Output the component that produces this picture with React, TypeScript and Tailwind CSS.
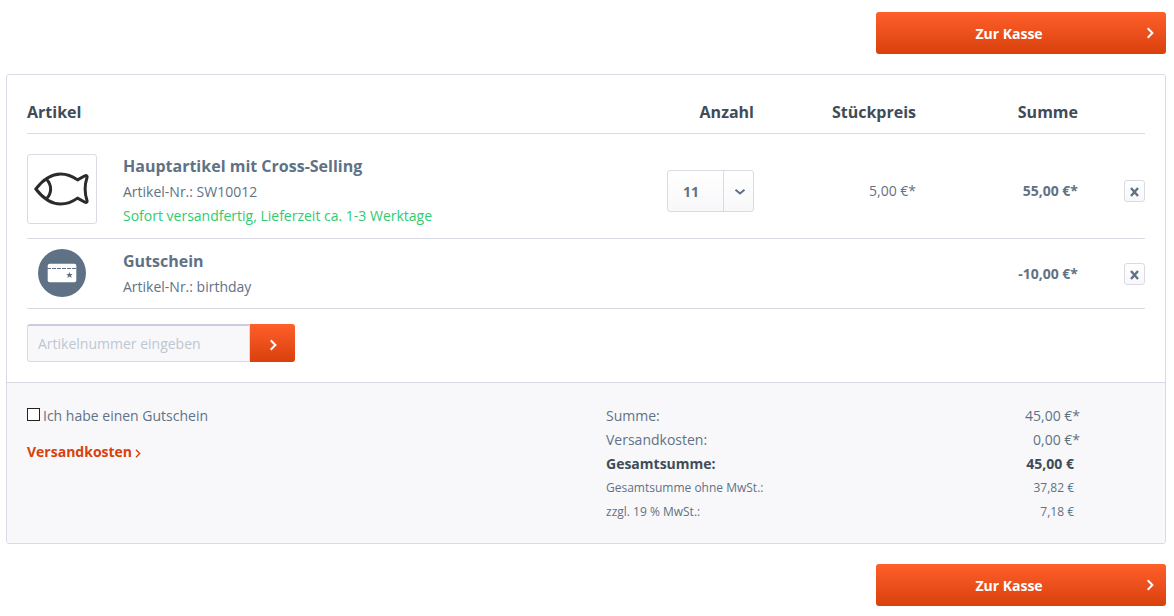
import type { ReactNode } from "react";

function ChevronRight({ className }: { className: string }) {
  return (
    <svg viewBox="0 0 8 12" fill="none" stroke="currentColor" className={className} aria-hidden="true">
      <path d="M1.7 1.3 6.400 6l-4.700 4.700" strokeWidth="2" />
    </svg>
  );
}

function CheckoutLink() {
  return (
    <div className="flex justify-end">
      <a
        href="#kasse"
        className="flex h-[42px] w-full items-center rounded-[3px] bg-linear-to-b from-[#ff5f29] to-[#d9400b] pr-3 text-sm font-bold text-white sm:w-1/4"
      >
        <span className="flex-1 pt-px pr-1 text-center">Zur Kasse</span>
        <ChevronRight className="mb-px h-3 w-2" />
      </a>
    </div>
  );
}

function FishIcon() {
  return (
    <svg viewBox="0 0 56 34" fill="none" stroke="#2b2b2b" strokeWidth="3" strokeLinejoin="round" className="h-[34px] w-14">
      <path d="M1.8 17C8 9 16 2 26.500 2c6.500 0 12 2.200 17 5.900l7.500-4.100c1.500-.6 2.500.2 2 1.700-2.600 8-2.600 15 0 23 .5 1.500-.5 2.300-2 1.700l-7.500-4.100c-5 3.700-10.500 5.900-17 5.900C16 32 8 25 1.800 17Z" />
      <path d="M12.500 7.200c5.500 5.800 5.500 13.800 0 19.600" />
    </svg>
  );
}

function VoucherIcon() {
  return (
    <svg viewBox="0 0 30 20" className="h-5 w-[30px]">
      <rect x="0.700" y="0.700" width="28.600" height="18.600" rx="2" fill="#fff" />
      <path d="M0 5.500h30" stroke="#5f7285" strokeWidth="1" strokeDasharray="4 1" />
      <path d="m22.500 9 .9 2 2.300.1-1.700 1.500.6 2.300-2.100-1.300-2.100 1.300.6-2.300-1.700-1.500 2.300-.1Z" fill="#5f7285" />
    </svg>
  );
}

function QuantitySelect() {
  return (
    <div className="relative ml-auto h-[42px] w-[87px] rounded-[3px] border border-[#dadae5] bg-linear-to-b from-white to-[#f8f8fa]">
      <select
        aria-label="Anzahl"
        defaultValue="11"
        className="h-full w-full appearance-none bg-transparent pt-px pl-[15px] text-sm font-bold text-[#5f7285]"
      >
        {Array.from({ length: 20 }, (_, i) => (
          <option key={i} value={i + 1}>
            {i + 1}
          </option>
        ))}
      </select>
      <span className="pointer-events-none absolute inset-y-0 right-0 flex w-[30px] items-center justify-center border-l border-[#dadae5] pt-0.5 pl-0.5">
        <svg viewBox="0 0 12 8" fill="none" stroke="#5f7285" strokeWidth="2" className="h-2 w-3">
          <path d="M1.500 1.700 6 5.500l4.500-3.800" />
        </svg>
      </span>
    </div>
  );
}

function RemoveButton({ name }: { name: string }) {
  return (
    <button
      type="button"
      aria-label={`${name} entfernen`}
      className="ml-auto flex h-[22px] w-[21px] items-center justify-center rounded-[3px] border border-[#dadae5] bg-linear-to-b from-white to-[#f8f8fa]"
    >
      <svg viewBox="0 0 9 10" stroke="#5f7285" strokeWidth="2.400" className="mt-0.5 h-2.5 w-[9px]">
        <path d="m1 1 7 8M8 1 1 9" />
      </svg>
    </button>
  );
}

type RowProps = {
  picture: ReactNode;
  name: string;
  number: string;
  delivery?: string;
  quantity?: ReactNode;
  price?: string;
  sum: string;
  padding: string;
};

function CartRow({ picture, name, number, delivery, quantity, price, sum, padding }: RowProps) {
  const cell = `border-b border-[#dadae5] ${padding}`;
  return (
    <tr>
      <td className={cell}>
        <div className="flex items-start gap-[26px]">
          {picture}
          <div className="leading-6">
            <a href="#artikel" className="mb-0.5 block text-base leading-6 font-bold">
              {name}
            </a>
            <p>Artikel-Nr.: {number}</p>
            {delivery && <p className="text-[#2ecc71]">{delivery}</p>}
          </div>
        </div>
      </td>
      <td className={cell}>{quantity}</td>
      <td className={`${cell} text-right leading-6`}>{price}</td>
      <td className={`${cell} text-right leading-6 font-bold`}>{sum}</td>
      <td className={cell}>
        <RemoveButton name={name} />
      </td>
    </tr>
  );
}

const totals = [
  { label: "Summe:", value: "45,00 €*", style: "" },
  { label: "Versandkosten:", value: "0,00 €*", style: "" },
  { label: "Gesamtsumme:", value: "45,00 €", style: "font-bold text-[#3f4c58]", inset: true },
  { label: "Gesamtsumme ohne MwSt.:", value: "37,82 €", style: "text-xs", inset: true },
  { label: "zzgl. 19 % MwSt.:", value: "7,18 €", style: "text-xs", inset: true },
];

export default function App() {
  const head = "border-b border-[#dadae5] pt-[5px] pb-[9px] text-base leading-6 font-bold text-[#3f4c58]";
  return (
    <main className="flex flex-col gap-5 bg-white pt-3 pr-2 pb-2.5 pl-1.5 font-['Open_Sans',sans-serif] text-sm text-[#5f7285]">
      <CheckoutLink />

      <section className="overflow-hidden rounded-[3px] border border-[#dadae5]">
        <div className="px-5 py-5">
          <table className="w-full table-fixed border-separate border-spacing-0">
            <thead>
              <tr>
                <th className={`${head} text-left`}>Artikel</th>
                <th className={`${head} w-[162px] text-right`}>Anzahl</th>
                <th className={`${head} w-[162px] text-right`}>Stückpreis</th>
                <th className={`${head} w-[162px] text-right`}>Summe</th>
                <th className={`${head} w-[67px]`} aria-label="Entfernen" />
              </tr>
            </thead>
            <tbody>
              <CartRow
                padding="pt-5 pb-2.5"
                picture={
                  <div className="flex size-[70px] items-center justify-center rounded-[3px] border border-[#dadae5]">
                    <FishIcon />
                  </div>
                }
                name="Hauptartikel mit Cross-Selling"
                number="SW10012"
                delivery="Sofort versandfertig, Lieferzeit ca. 1-3 Werktage"
                quantity={<QuantitySelect />}
                price="5,00 €*"
                sum="55,00 €*"
              />
              <CartRow
                padding="pt-2.5 pb-[9px]"
                picture={
                  <div className="flex w-[70px] justify-center">
                    <div className="flex size-12 items-center justify-center rounded-full bg-[#5f7285]">
                      <VoucherIcon />
                    </div>
                  </div>
                }
                name="Gutschein"
                number="birthday"
                sum="-10,00 €*"
              />
            </tbody>
          </table>

          <form className="mt-[15px] flex h-[38px]" onSubmit={(e) => e.preventDefault()}>
            <input
              type="text"
              aria-label="Artikelnummer"
              placeholder="Artikelnummer eingeben"
              className="w-[223px] rounded-l-[3px] border border-t-2 border-[#dadae5] border-t-[#cbcbdb] bg-[#f8f8fa] px-2.5 placeholder:text-[#bcc7d1]"
            />
            <button
              type="submit"
              aria-label="Artikel hinzufügen"
              className="flex w-[45px] items-center justify-center rounded-r-[3px] bg-linear-to-b from-[#ff5f29] to-[#d9400b] pt-1 text-white"
            >
              <ChevronRight className="h-3 w-2" />
            </button>
          </form>
        </div>

        <div className="grid grid-cols-2 border-t border-[#dadae5] bg-[#f8f8fa] px-5 pt-[21px] pb-[19px] leading-6">
          <div>
            <label className="flex items-center gap-[3px]">
              <input
                type="checkbox"
                className="mb-[3px] size-[13px] appearance-none border border-[#222] bg-white checked:bg-[#222]"
              />
              Ich habe einen Gutschein
            </label>
            <a href="#versandkosten" className="mt-3 inline-flex items-center gap-[3px] font-bold text-[#d9400b]">
              Versandkosten
              <svg viewBox="0 0 6 9" fill="none" stroke="currentColor" strokeWidth="1.400" className="mt-[3px] h-[9px] w-1.5">
                <path d="M1 .7 4.700 4.500 1 8.300" />
              </svg>
            </a>
          </div>
          <dl className="pr-[65px] pl-5">
            {totals.map((t) => (
              <div key={t.label} className={`flex justify-between ${t.style}`}>
                <dt className="leading-6">{t.label}</dt>
                <dd className={t.inset ? "pr-1.5 leading-6" : "leading-6"}>{t.value}</dd>
              </div>
            ))}
          </dl>
        </div>
      </section>

      <CheckoutLink />
    </main>
  );
}
